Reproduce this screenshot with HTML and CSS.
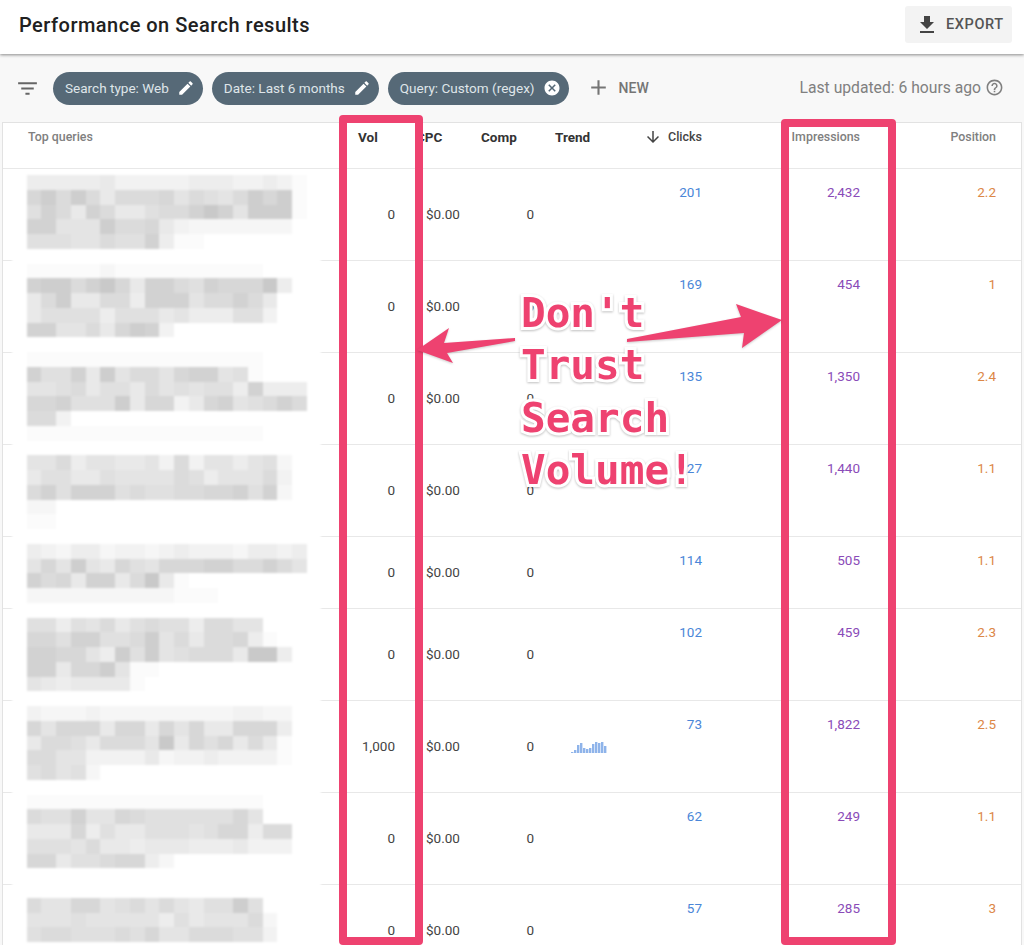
FILE: index.html
```html
<!DOCTYPE html>
<html lang="en">
<head>
    <meta charset="UTF-8">
    <title>Performance on Search results</title>
    <link rel="stylesheet" href="styles.css">
</head>
<body>
    <header class="header">
        <h1>Performance on Search results</h1>
        <button class="btn-export">
            <svg class="icon icon-export" viewBox="0 0 24 24"><path d="M19 9h-4V3H9v6H5l7 7 7-7zM5 18v2h14v-2H5z"/></svg>
            EXPORT
        </button>
    </header>

    <div class="toolbar">
        <svg class="icon icon-filter" viewBox="0 0 24 24"><path d="M10 18h4v-2h-4v2zM3 6v2h18V6H3zm3 7h12v-2H6v2z"/></svg>
        <div class="chip">Search type: Web
            <svg class="icon icon-chip" viewBox="0 0 24 24"><path d="M3 17.25V21h3.75L17.81 9.94l-3.75-3.75L3 17.25zM20.71 7.04c.39-.39.39-1.02 0-1.41l-2.34-2.34c-.39-.39-1.02-.39-1.41 0l-1.83 1.83 3.75 3.75 1.83-1.83z"/></svg>
        </div>
        <div class="chip">Date: Last 6 months
            <svg class="icon icon-chip" viewBox="0 0 24 24"><path d="M3 17.25V21h3.75L17.81 9.94l-3.75-3.75L3 17.25zM20.71 7.04c.39-.39.39-1.02 0-1.41l-2.34-2.34c-.39-.39-1.02-.39-1.41 0l-1.83 1.83 3.75 3.75 1.83-1.83z"/></svg>
        </div>
        <div class="chip">Query: Custom (regex)
            <svg class="icon icon-chip" viewBox="0 0 24 24"><path d="M12 2C6.47 2 2 6.47 2 12s4.47 10 10 10 10-4.47 10-10S17.53 2 12 2zm5 13.59L15.59 17 12 13.41 8.41 17 7 15.59 10.59 12 7 8.41 8.41 7 12 10.59 15.59 7 17 8.41 13.41 12 17 15.59z"/></svg>
        </div>
        <div class="btn-new">
            <svg class="icon icon-add" viewBox="0 0 24 24"><path d="M19 13h-6v6h-2v-6H5v-2h6V5h2v6h6v2z"/></svg>
            NEW
        </div>
        <div class="updated">Last updated: 6 hours ago
            <svg class="icon icon-help" viewBox="0 0 24 24"><path d="M11 18h2v-2h-2v2zm1-16C6.48 2 2 6.48 2 12s4.48 10 10 10 10-4.48 10-10S17.52 2 12 2zm0 18c-4.41 0-8-3.59-8-8s3.59-8 8-8 8 3.59 8 8-3.59 8-8 8zm0-14c-2.21 0-4 1.79-4 4h2c0-1.1.9-2 2-2s2 .9 2 2c0 2-3 1.75-3 5h2c0-2.25 3-2.5 3-5 0-2.21-1.79-4-4-4z"/></svg>
        </div>
    </div>

    <div class="table">
        <div class="row row-head">
            <div class="th-grey">Top queries</div>
            <div class="th-bold">Vol</div>
            <div class="th-bold th-cpc">CPC</div>
            <div class="th-bold th-comp">Comp</div>
            <div class="th-bold th-comp">Trend</div>
            <div class="th-clicks">
                <svg class="icon icon-sort" viewBox="0 0 24 24"><path d="M20 12l-1.41-1.41L13 16.17V4h-2v12.17l-5.58-5.59L4 12l8 8 8-8z"/></svg>
                Clicks
            </div>
            <div class="th-grey th-right">Impressions</div>
            <div class="th-grey th-right">Position</div>
        </div>

        <div class="row">
            <div></div><div class="vol">0</div><div class="cpc">$0.00</div><div class="comp">0</div><div></div>
            <div class="clicks">201</div><div class="impr">2,432</div><div class="pos">2.2</div>
        </div>
        <div class="row">
            <div></div><div class="vol">0</div><div class="cpc">$0.00</div><div class="comp">0</div><div></div>
            <div class="clicks">169</div><div class="impr">454</div><div class="pos">1</div>
        </div>
        <div class="row">
            <div></div><div class="vol">0</div><div class="cpc">$0.00</div><div class="comp">0</div><div></div>
            <div class="clicks">135</div><div class="impr">1,350</div><div class="pos">2.4</div>
        </div>
        <div class="row">
            <div></div><div class="vol">0</div><div class="cpc">$0.00</div><div class="comp">0</div><div></div>
            <div class="clicks">127</div><div class="impr">1,440</div><div class="pos">1.1</div>
        </div>
        <div class="row row-short">
            <div></div><div class="vol">0</div><div class="cpc">$0.00</div><div class="comp">0</div><div></div>
            <div class="clicks">114</div><div class="impr">505</div><div class="pos">1.1</div>
        </div>
        <div class="row">
            <div></div><div class="vol">0</div><div class="cpc">$0.00</div><div class="comp">0</div><div></div>
            <div class="clicks">102</div><div class="impr">459</div><div class="pos">2.3</div>
        </div>
        <div class="row">
            <div></div><div class="vol">1,000</div><div class="cpc">$0.00</div><div class="comp">0</div>
            <div class="trend">
                <svg width="37" height="12" viewBox="0 0 37 12">
                    <rect x="0" y="11" width="2.4" height="1"/><rect x="3" y="9" width="2.4" height="3"/>
                    <rect x="6" y="4" width="2.4" height="8"/><rect x="9" y="2" width="2.4" height="10"/>
                    <rect x="12" y="7" width="2.4" height="5"/><rect x="15" y="8" width="2.4" height="4"/>
                    <rect x="18" y="7" width="2.4" height="5"/><rect x="21" y="3" width="2.4" height="9"/>
                    <rect x="24" y="1" width="2.4" height="11"/><rect x="27" y="2" width="2.4" height="10"/>
                    <rect x="30" y="1" width="2.4" height="11"/><rect x="33" y="5" width="2.4" height="7"/>
                </svg>
            </div>
            <div class="clicks">73</div><div class="impr">1,822</div><div class="pos">2.5</div>
        </div>
        <div class="row">
            <div></div><div class="vol">0</div><div class="cpc">$0.00</div><div class="comp">0</div><div></div>
            <div class="clicks">62</div><div class="impr">249</div><div class="pos">1.1</div>
        </div>
        <div class="row">
            <div></div><div class="vol">0</div><div class="cpc">$0.00</div><div class="comp">0</div><div></div>
            <div class="clicks">57</div><div class="impr">285</div><div class="pos">3</div>
        </div>
    </div>

    <!-- blurred-out query names, filled by script.js -->
    <div class="mosaic" id="mosaic"></div>

    <!-- annotation layer drawn on top of the screenshot -->
    <div class="mark mark-vol"></div>
    <div class="mark mark-impr"></div>
    <svg class="arrows" width="1024" height="945" viewBox="0 0 1024 945">
        <polygon points="417,350 449,328 444,343 515,338 515,341 447,353 453,363"/>
        <polygon points="782,320 736,304 741,317 627,339 627,342 744,333 742,348"/>
    </svg>
    <div class="callout">
        <span>Don't</span>
        <span>Trust</span>
        <span>Search</span>
        <span>Volume!</span>
    </div>

    <script src="script.js"></script>
</body>
</html>
```

FILE: styles.css
```css
* {
    margin: 0;
    padding: 0;
    box-sizing: border-box;
    font-family: 'Roboto', sans-serif;
}

body {
    position: relative;
    height: 945px;
    overflow: hidden;
    background: #f8f8f8;
    color: #444;
}

.icon {
    display: block;
    flex: none;
    fill: currentColor;
}

.header {
    position: relative;
    z-index: 1;
    height: 54px;
    padding: 0 12px 0 19px;
    display: flex;
    align-items: center;
    justify-content: space-between;
    background: #fff;
    box-shadow: 0 1px 3px rgba(0,0,0,0.45);
}

.header h1 {
    margin-top: -4px;
    font-size: 20px;
    font-weight: 500;
    color: #212121;
    letter-spacing: 0.48px;
}

.btn-export {
    width: 107px;
    height: 37px;
    margin-top: -5px;
    padding-left: 10px;
    display: flex;
    align-items: center;
    gap: 7px;
    border: none;
    border-radius: 3px;
    background: #f3f3f3;
    color: #555;
    font-size: 14.5px;
    font-weight: 500;
    letter-spacing: 0.6px;
}

.icon-export {
    width: 24px;
    height: 24px;
    color: #444;
}

.toolbar {
    height: 68px;
    padding: 0 20px 0 15px;
    display: flex;
    align-items: center;
    gap: 9px;
}

.icon-filter {
    width: 25px;
    height: 25px;
    margin-right: 4px;
    color: #666;
}

.chip {
    height: 33px;
    padding: 0 8px 1px 12px;
    display: flex;
    align-items: center;
    gap: 8px;
    border-radius: 17px;
    background: #566977;
    color: #dfe5e9;
    font-size: 13.55px;
}

.icon-chip {
    width: 18px;
    height: 18px;
    color: #fff;
}

.btn-new {
    margin-left: 8px;
    padding-bottom: 1px;
    display: flex;
    align-items: center;
    gap: 8px;
    color: #757575;
    font-size: 14px;
    font-weight: 500;
}

.icon-add {
    width: 25px;
    height: 25px;
}

.updated {
    margin-left: auto;
    padding-bottom: 1px;
    display: flex;
    align-items: center;
    gap: 4px;
    color: #808080;
    font-size: 15.7px;
}

.icon-help {
    width: 19px;
    height: 19px;
}

.table {
    margin: 0 2px;
    border: 1px solid #e2e2e2;
    border-bottom: none;
    background: #fff;
    font-size: 13.5px;
}

.row {
    height: 92px;
    display: grid;
    grid-template-columns: 355px 37px 65px 74px 96px 72px 158px 136px;
    border-bottom: 1px solid #e8e8e8;
}

.row-head {
    height: 46px;
    padding-top: 6px;
    line-height: 16px;
}

.row-short { height: 72px; }

.th-grey {
    padding-left: 25px;
    color: #808080;
    font-size: 12.4px;
    font-weight: 500;
}

.th-right {
    padding-left: 0;
    text-align: right;
}

.th-bold {
    color: #333;
    font-weight: 700;
}

.th-cpc { padding-left: 21px; }
.th-comp { padding-left: 21px; }

.th-clicks {
    height: 16px;
    display: flex;
    align-items: center;
    justify-content: flex-end;
    gap: 6px;
    color: #444;
    font-size: 12.5px;
    font-weight: 500;
}

.icon-sort {
    width: 18px;
    height: 18px;
    color: #444;
}

.vol, .cpc, .comp {
    align-self: center;
    padding-bottom: 2px;
    text-align: right;
    color: #444;
}

.cpc {
    padding-left: 31px;
    text-align: left;
}

.trend {
    align-self: center;
    padding-left: 37px;
}

.trend svg {
    display: block;
    fill: #8fb4ea;
}

.clicks, .impr, .pos {
    padding-top: 15px;
    line-height: 16px;
    text-align: right;
}

.clicks { color: #4a86d8; }
.impr { color: #8a4bb8; }
.pos { color: #dc8747; }

.mosaic {
    position: absolute;
    left: 12px;
    top: 175px;
    width: 309px;
    padding-left: 14.6px;
    background: #fff;
    filter: blur(1px);
}

.mosaic-row {
    height: 14.75px;
    display: grid;
    grid-template-columns: repeat(20, 14.75px);
}

.mark {
    position: absolute;
    border: 8px solid #ee4270;
    border-radius: 4px;
}

.mark-vol {
    left: 339px;
    top: 115px;
    width: 84px;
    height: 830px;
}

.mark-impr {
    left: 781px;
    top: 119px;
    width: 115px;
    height: 826px;
}

.arrows {
    position: absolute;
    left: 0;
    top: 0;
    fill: #ee4270;
    filter: drop-shadow(0 1px 1px rgba(0,0,0,0.2));
}

.callout {
    position: absolute;
    left: 521px;
    top: 287px;
    display: flex;
    flex-direction: column;
    color: #ee4270;
    filter: drop-shadow(0 1px 1px rgba(0,0,0,0.25));
}

.callout span {
    font-family: 'DejaVu Sans Mono', monospace;
    font-size: 41px;
    font-weight: 700;
    line-height: 52.4px;
    -webkit-text-stroke: 6px #fff;
    paint-order: stroke fill;
}
```

FILE: script.js
```js
// grey level per mosaic cell, one hex digit per cell, one string per row
const rows = [
    '4444453333344433431',
    '9b8b85888968768b9b1',
    '7a85a855788aca6bbb1',
    'aa666b889532222222',
    '77766877a411',
    '',
    '1111121111111111',
    'abb8ac95aa87a999c4',
    '58b55884aaa688a85',
    '57777477756444773',
    'aa66859ba3',
    '',
    '1111111111111111',
    'a77a5b68869aa671',
    '667857758676774a444',
    '99a777b59935 9a678a8',
    '883',
    '1111111111111111',
    '',
    '668466556383664672',
    '577557666687466683',
    '8a7aaa7877889 9a7a2',
    '22',
    '11',
    '',
    '4324423323433324434',
    '696b6597699 9aa88a86',
    'a895aa58c51',
    '2222222222111',
    '',
    '7747685787748866',
    '997aa778b68588941',
    'aa9964b7b678885cc4',
    'aa599b611',
    '65455551',
    '',
    '322232222222223322',
    '969995995969559994',
    '58875888 6c5979585 1',
    '886633335233433331',
    '78672',
    '',
    '1111111111111111',
    '877a669877777796',
    '555947557776 7994 88',
    '777685545554445333',
    '995778994 2',
    '',
    '',
    '866996786865 77b7',
    '66676666647566682',
    '78877787966888773',
    ''
];

const mosaic = document.getElementById('mosaic');

rows.forEach(row => {
    const line = document.createElement('div');
    line.className = 'mosaic-row';
    row.replace(/ /g, '').split('').forEach(digit => {
        const grey = Math.round(255 - parseInt(digit, 16) * 4.5);
        const cell = document.createElement('div');
        cell.style.background = `rgb(${grey},${grey},${grey})`;
        line.appendChild(cell);
    });
    mosaic.appendChild(line);
});
```
